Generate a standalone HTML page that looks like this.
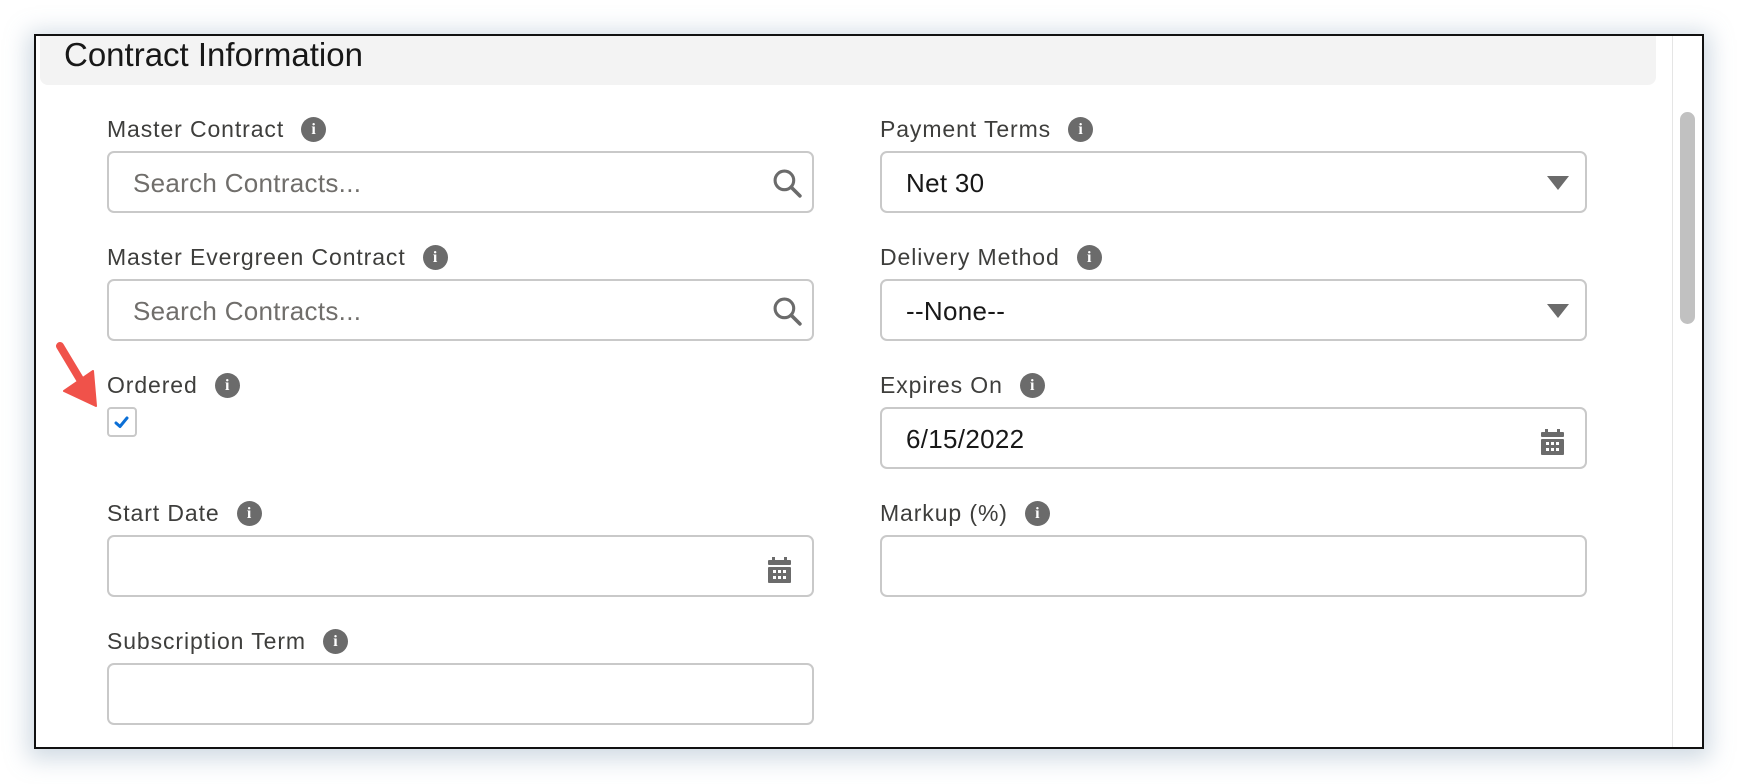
<!DOCTYPE html>
<html><head><style>
*{box-sizing:border-box;margin:0;padding:0}
body{width:1738px;height:784px;background:#fff;position:relative;overflow:hidden;font-family:"Liberation Sans",sans-serif}
.frame{position:absolute;left:34px;top:34px;width:1670px;height:715px;border:2px solid #111;background:#fff;box-shadow:0 4px 22px 6px rgba(120,150,175,.35)}
.hdr{position:absolute;left:40px;top:36px;width:1616px;height:49px;background:#f3f3f3;border-radius:0 0 8px 8px}
.title{position:absolute;left:64px;top:36px;font-size:33px;color:#181818}
.sdiv{position:absolute;left:1672px;top:36px;width:1px;height:711px;background:#e5e5e5}
.thumb{position:absolute;left:1680px;top:112px;width:15px;height:212px;background:#c1c1c1;border-radius:8px}
.lbl{position:absolute;font-size:23px;letter-spacing:0.9px;color:#3e3e3c;white-space:nowrap;display:flex;align-items:center;height:28px}
.info{display:inline-block;width:25px;height:25px;border-radius:50%;background:#6b6b6b;color:#fff;font-family:"Liberation Serif",serif;font-weight:bold;font-size:16px;line-height:25px;text-align:center;margin-left:17px;letter-spacing:0}
.inp{position:absolute;width:707px;height:62px;border:2px solid #c9c9c9;border-radius:7px;background:#fff;font-size:26px;letter-spacing:0.3px;color:#181818;padding-left:24px;line-height:61px}
.ph{color:#706e6b}
.ic{position:absolute}
.cb{position:absolute;left:107px;top:407px;width:30px;height:30px;border:2px solid #c9c9c9;border-radius:4px;background:#fff}
</style></head><body>
<div class="frame"></div>
<div class="hdr"></div>
<div class="title">Contract Information</div>
<div class="sdiv"></div>
<div class="thumb"></div>

<div class="lbl" style="left:107px;top:115px">Master Contract<span class="info">i</span></div>
<div class="inp" style="left:107px;top:151px"><span class="ph">Search Contracts...</span></div>
<svg class="ic" style="left:772px;top:168px" width="31" height="31" viewBox="0 0 30 30"><circle cx="12" cy="12" r="9" fill="none" stroke="#6b6b6b" stroke-width="3"/><line x1="18.5" y1="18.5" x2="27" y2="27" stroke="#6b6b6b" stroke-width="3.5" stroke-linecap="round"/></svg>

<div class="lbl" style="left:107px;top:243px">Master Evergreen Contract<span class="info">i</span></div>
<div class="inp" style="left:107px;top:279px"><span class="ph">Search Contracts...</span></div>
<svg class="ic" style="left:772px;top:296px" width="31" height="31" viewBox="0 0 30 30"><circle cx="12" cy="12" r="9" fill="none" stroke="#6b6b6b" stroke-width="3"/><line x1="18.5" y1="18.5" x2="27" y2="27" stroke="#6b6b6b" stroke-width="3.5" stroke-linecap="round"/></svg>

<div class="lbl" style="left:107px;top:371px">Ordered<span class="info">i</span></div>
<div class="cb"><svg width="26" height="26" viewBox="0 0 26 26"><path d="M7 14 L11 17.5 L18 9" fill="none" stroke="#0b6fd6" stroke-width="3" stroke-linecap="round" stroke-linejoin="round"/></svg></div>

<div class="lbl" style="left:107px;top:499px">Start Date<span class="info">i</span></div>
<div class="inp" style="left:107px;top:535px"></div>
<svg class="ic" style="left:767px;top:557px" width="25" height="27" viewBox="0 0 25 27"><rect x="5" y="0" width="3" height="5" fill="#6b6b6b"/><rect x="17" y="0" width="3" height="5" fill="#6b6b6b"/><rect x="1" y="3" width="23" height="5" rx="1" fill="#6b6b6b"/><rect x="1" y="10" width="23" height="16" rx="1" fill="#6b6b6b"/><g fill="#fff"><rect x="6" y="13" width="3" height="3"/><rect x="11" y="13" width="3" height="3"/><rect x="16" y="13" width="3" height="3"/><rect x="6" y="19" width="3" height="3"/><rect x="11" y="19" width="3" height="3"/><rect x="16" y="19" width="3" height="3"/></g></svg>

<div class="lbl" style="left:107px;top:627px">Subscription Term<span class="info">i</span></div>
<div class="inp" style="left:107px;top:663px"></div>

<div class="lbl" style="left:880px;top:115px">Payment Terms<span class="info">i</span></div>
<div class="inp" style="left:880px;top:151px">Net 30</div>
<svg class="ic" style="left:1547px;top:176px" width="22" height="14" viewBox="0 0 22 14"><path d="M0 0 H22 L11 14 Z" fill="#6b6b6b"/></svg>

<div class="lbl" style="left:880px;top:243px">Delivery Method<span class="info">i</span></div>
<div class="inp" style="left:880px;top:279px">--None--</div>
<svg class="ic" style="left:1547px;top:304px" width="22" height="14" viewBox="0 0 22 14"><path d="M0 0 H22 L11 14 Z" fill="#6b6b6b"/></svg>

<div class="lbl" style="left:880px;top:371px">Expires On<span class="info">i</span></div>
<div class="inp" style="left:880px;top:407px">6/15/2022</div>
<svg class="ic" style="left:1540px;top:429px" width="25" height="27" viewBox="0 0 25 27"><rect x="5" y="0" width="3" height="5" fill="#6b6b6b"/><rect x="17" y="0" width="3" height="5" fill="#6b6b6b"/><rect x="1" y="3" width="23" height="5" rx="1" fill="#6b6b6b"/><rect x="1" y="10" width="23" height="16" rx="1" fill="#6b6b6b"/><g fill="#fff"><rect x="6" y="13" width="3" height="3"/><rect x="11" y="13" width="3" height="3"/><rect x="16" y="13" width="3" height="3"/><rect x="6" y="19" width="3" height="3"/><rect x="11" y="19" width="3" height="3"/><rect x="16" y="19" width="3" height="3"/></g></svg>

<div class="lbl" style="left:880px;top:499px">Markup (%)<span class="info">i</span></div>
<div class="inp" style="left:880px;top:535px"></div>

<svg class="ic" style="left:0;top:0" width="200" height="450" viewBox="0 0 200 450"><line x1="60" y1="346" x2="84" y2="386" stroke="#f0524a" stroke-width="8" stroke-linecap="round"/><path d="M96 406 L64 391 L93 371 Z" fill="#f0524a" stroke="#f0524a" stroke-width="2" stroke-linejoin="round"/></svg>
</body></html>
